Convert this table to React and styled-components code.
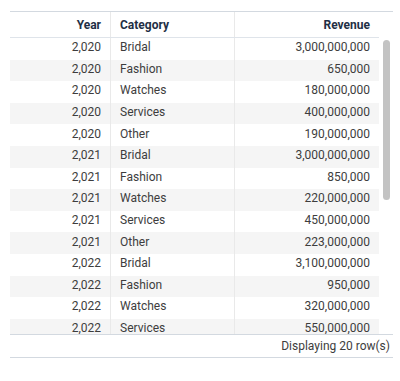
import React from "react";
import styled, { createGlobalStyle } from "styled-components";

const Global = createGlobalStyle`
  html, body { margin: 0; padding: 0; background: #ffffff; }
  body { font-family: Roboto, "Noto Sans", Arial, sans-serif; }
`;

const Page = styled.div`
  padding: 11px 7px 0 10px;
`;

const Grid = styled.div`
  width: 383px;
  border-top: 1px solid #d3d9e0;
  font-size: 12px;
`;

const Main = styled.div`
  display: flex;
`;

const TableArea = styled.div`
  width: 369px;
  display: flex;
  flex-direction: column;
`;

const Row = styled.div`
  display: grid;
  grid-template-columns: 101px 124px 144px;
  height: ${(p) => p.$h}px;
  background: ${(p) => (p.$striped ? "#f5f5f5" : "#ffffff")};
  border-bottom: ${(p) => (p.$header ? "1px solid #dfe4ea" : "none")};
  flex-shrink: 0;
`;

const Cell = styled.div`
  display: flex;
  align-items: center;
  justify-content: ${(p) => (p.$right ? "flex-end" : "flex-start")};
  padding: 0 9px ${(p) => (p.$header ? "0" : "3px")};
  border-right: ${(p) => (p.$last ? "none" : "1px solid #e9e9e9")};
  color: ${(p) => (p.$header ? "#1f2f45" : "#3d3d3d")};
  font-weight: ${(p) => (p.$header ? 700 : 400)};
  white-space: nowrap;
  overflow: hidden;
`;

const Body = styled.div`
  height: 296px;
  overflow: hidden;
  display: flex;
  flex-direction: column;
`;

const Track = styled.div`
  width: 14px;
  padding-top: 28px;
  box-sizing: border-box;
  display: flex;
  justify-content: center;
`;

const Thumb = styled.div`
  width: 7px;
  height: 160px;
  margin-left: 1px;
  border-radius: 4px;
  background: #c3c3c3;
`;

const Footer = styled.div`
  height: 22px;
  border-top: 1px solid #d3d9e0;
  border-bottom: 1px solid #d3d9e0;
  display: flex;
  align-items: center;
  justify-content: flex-end;
  padding-right: 3px;
  color: #3d3d3d;
`;

const categories = ["Bridal", "Fashion", "Watches", "Services", "Other"];
const revenue = {
  2020: ["3,000,000,000", "650,000", "180,000,000", "400,000,000", "190,000,000"],
  2021: ["3,000,000,000", "850,000", "220,000,000", "450,000,000", "223,000,000"],
  2022: ["3,100,000,000", "950,000", "320,000,000", "550,000,000", "240,000,000"],
  2023: ["3,200,000,000", "1,000,000", "380,000,000", "600,000,000", "260,000,000"],
};
const data = [];
[2020, 2021, 2022, 2023].forEach((y) =>
  categories.forEach((c, i) =>
    data.push({ year: y.toLocaleString("en-US"), category: c, revenue: revenue[y][i] })
  )
);

export default function App() {
  return (
    <Page>
      <Global />
      <Grid>
        <Main>
          <TableArea>
            <Row $header $h={25}>
              <Cell $header $right>Year</Cell>
              <Cell $header>Category</Cell>
              <Cell $header $right $last>Revenue</Cell>
            </Row>
            <Body>
              {data.slice(0, 14).map((d, i) => (
                <Row key={i} $h={21.6} $striped={i % 2 === 1}>
                  <Cell $right>{d.year}</Cell>
                  <Cell>{d.category}</Cell>
                  <Cell $right $last>{d.revenue}</Cell>
                </Row>
              ))}
            </Body>
          </TableArea>
          <Track>
            <Thumb />
          </Track>
        </Main>
        <Footer>Displaying 20 row(s)</Footer>
      </Grid>
    </Page>
  );
}
